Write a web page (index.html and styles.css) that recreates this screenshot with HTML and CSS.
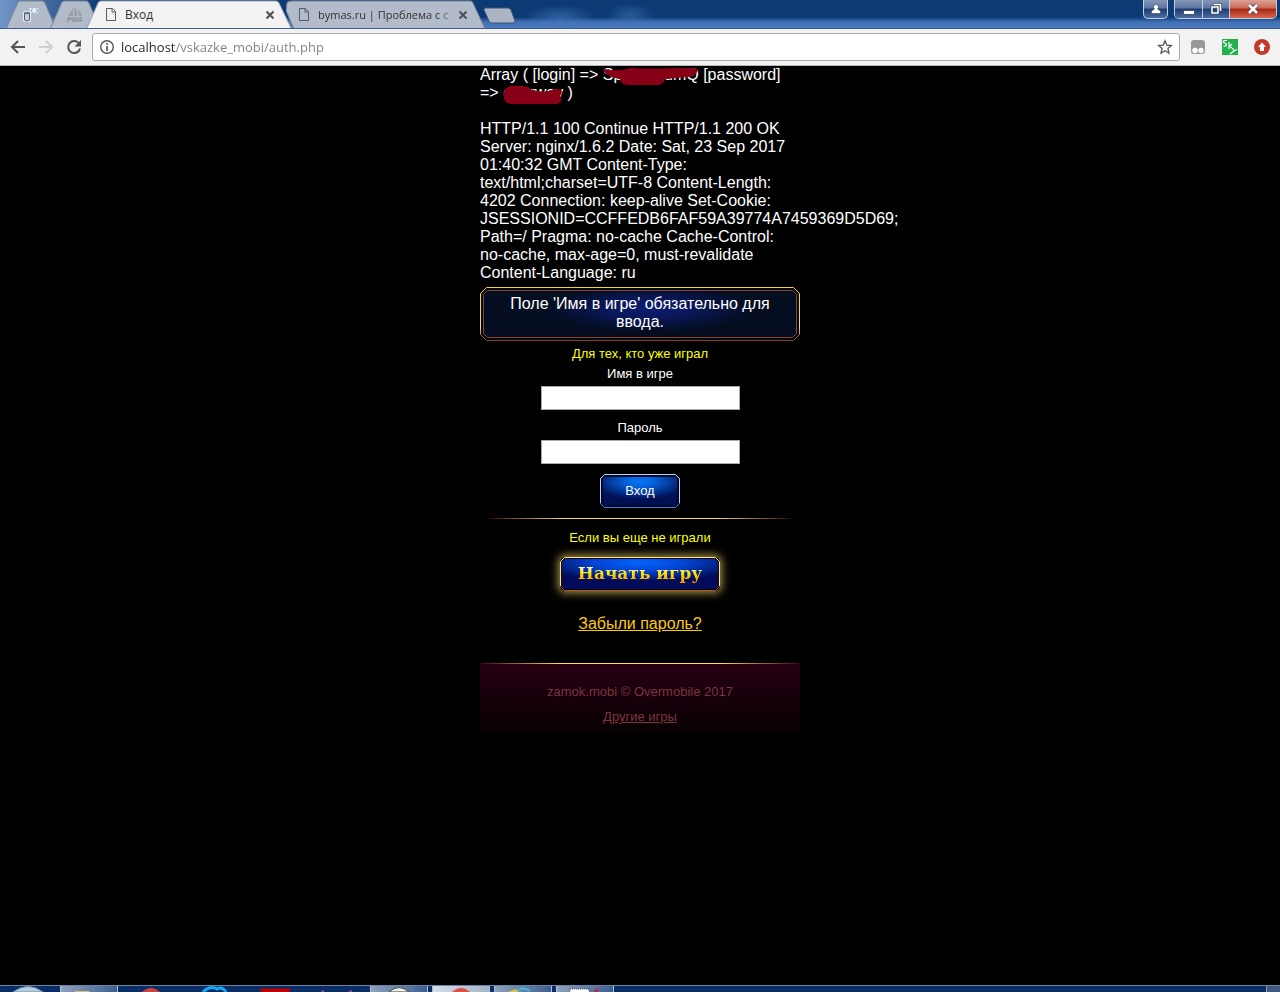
FILE: index.html
```
<!DOCTYPE html>
<html lang="ru">
<head>
  <meta charset="UTF-8">
  <meta name="viewport" content="width=device-width, initial-scale=1.0">
  <title>Вход</title>
  <link rel="stylesheet" href="styles.css">
</head>
<body>
  <header class="titlebar">
    <div class="tabs">
      <button class="tab pinned" aria-label="localhost">
        <svg class="tab-shape" viewBox="0 0 50 28" preserveAspectRatio="none"><path d="M0 28 L12 2 Q13 1 15 1 H36 Q38 1 39 3 L50 28Z"/></svg>
        <svg class="tab-icon" width="16" height="16" viewBox="0 0 16 16"><path d="M0 5Q4 2 8 5V14Q4 16 0 14zM6 1H15V6H8z" fill="#e9eff7"/><path d="M1.500 6Q4 4 6.500 6V13Q4 15 1.500 13zQ4 8 6.500 6" fill="#c9d3e0" stroke="#4f5b6c"/><path d="M9.500 1.500L8 3.500l1.500 2M13 1.500L14.500 3.500 13 5.500" fill="none" stroke="#7e8da2"/></svg>
      </button>
      <button class="tab pinned" aria-label="phpMyAdmin">
        <svg class="tab-shape" viewBox="0 0 50 28" preserveAspectRatio="none"><path d="M0 28 L12 2 Q13 1 15 1 H36 Q38 1 39 3 L50 28Z"/></svg>
        <svg class="tab-icon" width="16" height="16" viewBox="0 0 16 16"><path d="M6 1v8H1zM8 0q3 4 2 9H7zM11 2q3 3 4 7h-3z" fill="#9aa0a8"/><text x="0" y="15" class="pma">PMA</text></svg>
      </button>
      <button class="tab active">
        <svg class="tab-shape" viewBox="0 0 206 28" preserveAspectRatio="none"><path d="M0 29 L12 3 Q13 1 15 1 H190 Q192 1 193 3 L206 29Z"/></svg>
        <svg class="tab-icon" width="12" height="16" viewBox="0 0 12 16"><path d="M1.500 1.500h6l3 3v9h-9zM7 1.500V5h3.500" fill="none" stroke="#5a5a5a"/></svg>
        <span class="tab-title">Вход</span>
        <svg class="tab-close" width="10" height="10" viewBox="0 0 10 10"><path d="M1.500 1.500l7 7M8.500 1.500l-7 7"/></svg>
      </button>
      <button class="tab other">
        <svg class="tab-shape" viewBox="0 0 200 28" preserveAspectRatio="none"><path d="M1 3 Q2 1 6 1 H184 Q186 1 187 3 L199 28 H8 L0 10Z"/></svg>
        <svg class="tab-icon" width="12" height="16" viewBox="0 0 12 16"><path d="M1.500 1.500h6l3 3v9h-9zM7 1.500V5h3.500" fill="none" stroke="#555d68"/></svg>
        <span class="tab-title fade">bymas.ru | Проблема с с</span>
        <svg class="tab-close" width="10" height="10" viewBox="0 0 10 10"><path d="M1.500 1.500l7 7M8.500 1.500l-7 7"/></svg>
      </button>
      <button class="new-tab" aria-label="Новая вкладка">
        <svg width="34" height="17" viewBox="0 0 34 17"><path d="M2 1H25Q27 1 28 3L32 14Q32 16 30 16H9Q7 16 6 14L1 3Q1 1 2 1Z" fill="#aab4c2" stroke="#3d5378"/></svg>
      </button>
    </div>
    <div class="window-buttons">
      <button class="win user" aria-label="Профиль"><svg width="12" height="12" viewBox="0 0 12 12"><path d="M6 1.500a2.500 2.500 0 0 1 1.500 4.500L10.500 8v2.500h-9V8L4.500 6A2.500 2.500 0 0 1 6 1.500z" fill="#fff" stroke="#36486a" stroke-width=".6"/></svg></button>
      <div class="win-group">
        <button class="win" aria-label="Свернуть"><svg width="12" height="12" viewBox="0 0 12 12"><path d="M.500 7.500h11v4H.500z" fill="#fff" stroke="#46536b"/></svg></button>
        <button class="win" aria-label="Окно"><svg width="12" height="12" viewBox="0 0 12 12"><path d="M4 1.500h6.500V8M2 4h6v6H2z" fill="none" stroke="#3a4a66" stroke-width="3"/><path d="M4 1.500h6.500V8M2 4h6v6H2z" fill="none" stroke="#fff" stroke-width="1.500"/></svg></button>
        <button class="win close" aria-label="Закрыть"><svg width="14" height="12" viewBox="0 0 14 12"><path d="M3 2l8 8M11 2l-8 8" stroke="#5a4450" stroke-width="4.500"/><path d="M3 2l8 8M11 2l-8 8" stroke="#fff" stroke-width="2.600"/></svg></button>
      </div>
    </div>
  </header>

  <nav class="toolbar">
    <button class="nav-btn" aria-label="Назад"><svg width="16" height="16" viewBox="0 0 16 16"><path d="M15 8H2M8 2L2 8l6 6" fill="none" stroke="#555" stroke-width="2"/></svg></button>
    <button class="nav-btn" aria-label="Вперёд" disabled><svg width="16" height="16" viewBox="0 0 16 16"><path d="M1 8h13M8 2l6 6-6 6" fill="none" stroke="#d0d0d0" stroke-width="2"/></svg></button>
    <button class="nav-btn" aria-label="Обновить"><svg width="16" height="16" viewBox="0 0 16 16"><path d="M13 4.500A6 6 0 1 0 14 9.500" fill="none" stroke="#555" stroke-width="2"/><path d="M15 1v6.500H8.500z" fill="#555"/></svg></button>
    <div class="omnibox">
      <svg width="16" height="16" viewBox="0 0 16 16"><circle cx="8" cy="8" r="6.300" fill="none" stroke="#555" stroke-width="1.400"/><path d="M7.200 4h1.700v1.700H7.200zM7.200 7h1.700v5H7.200z" fill="#555"/></svg>
      <input class="url" type="text" aria-label="Адрес" value="localhost/vskazke_mobi/auth.php">
      <button class="star" aria-label="В закладки"><svg width="16" height="16" viewBox="0 0 16 16"><path d="M8 1.800l1.800 4.300 4.700.4-3.600 3.100 1.100 4.600L8 11.700l-4 2.500 1.100-4.600-3.600-3.100 4.700-.4z" fill="none" stroke="#555" stroke-width="1.300"/></svg></button>
    </div>
    <div class="extensions">
      <button class="nav-btn" aria-label="Tampermonkey"><svg width="16" height="16" viewBox="0 0 16 16"><rect x="1" y="1" width="14" height="14" rx="3" fill="#999"/><circle cx="5" cy="11.500" r="2.700" fill="#fff"/><circle cx="11" cy="11.500" r="2.700" fill="#fff"/></svg></button>
      <button class="nav-btn" aria-label="Sky"><svg width="16" height="16" viewBox="0 0 16 16"><path d="M0 0h16v16H0z" fill="#22b14c"/><path d="M5 1.500H2L1.500 3.500 4.500 5 4 7H1.500M7 3v7M10 5L7.500 7l2.500 2M10.500 9l1.500 3M15 10.500l-3 1.500-4 3" fill="none" stroke="#fff" stroke-width="1.200"/></svg></button>
      <button class="nav-btn" aria-label="Обновление"><svg width="16" height="16" viewBox="0 0 16 16"><circle cx="8" cy="8" r="8" fill="#c53929"/><path d="M8 3.500L12 8H10v4H6V8H4z" fill="#fff"/></svg></button>
    </div>
  </nav>

  <main class="page">
    <div class="content">
      <p class="dump">Array ( [login] =&gt; <span class="hidden login"><span>Sp</span><span>umQ</span><svg viewBox="0 0 96 20"><path d="M1 3Q14 6 28 2Q50 3 70 2H90Q96 2 94 6Q92 11 84 11L62 13Q60 19 54 19H24Q17 18 17 13Q9 12 3 8Q-1 4 1 3Z"/></svg></span> [password] =&gt; <span class="hidden password"><span>c</span><span>rway</span><svg viewBox="0 0 60 20"><path d="M8 2Q18 1 25 3L29 6Q40 9 49 6Q58 3 59 8L57 12Q61 18 54 20H8Q0 19 1 11Q0 4 8 2Z"/></svg></span> )</p>
      <p class="dump">HTTP/1.1 100 Continue HTTP/1.1 200 OK Server: nginx/1.6.2 Date: Sat, 23 Sep 2017 01:40:32 GMT Content-Type: text/html;charset=UTF-8 Content-Length: 4202 Connection: keep-alive Set-Cookie: JSESSIONID=CCFFEDB6FAF59A39774A7459369D5D69; Path=/ Pragma: no-cache Cache-Control: no-cache, max-age=0, must-revalidate Content-Language: ru</p>

      <div class="notice">
        <svg class="frame" viewBox="0 0 320 54" preserveAspectRatio="none">
          <defs>
            <radialGradient id="glow" cx="53%" cy="38%" r="50%" gradientTransform="translate(.17 0) scale(.68 1)"><stop offset="0" stop-color="#0b1c70"/><stop offset=".4" stop-color="#0a185c"/><stop offset=".75" stop-color="#061137"/><stop offset="1" stop-color="#040e20"/></radialGradient>
            <linearGradient id="gold" x1="0" y1="0" x2="0" y2="1"><stop offset="0" stop-color="#f5d52c"/><stop offset=".75" stop-color="#eed574"/><stop offset="1" stop-color="#8a3f14"/></linearGradient>
          </defs>
          <path d="M6.500 .5H313.500L319.500 6.500V47.500L313.500 53.500H6.500L.5 47.500V6.500Z" fill="#030817" stroke="url(#gold)"/>
          <path d="M7.500 3.500H312.500L316.500 7.500V46.500L312.500 50.500H7.500L3.500 46.500V7.500Z" fill="url(#glow)" stroke="#87432b"/>
        </svg>
        <span>Поле 'Имя в игре' обязательно для ввода.</span>
      </div>

      <form class="login-form">
        <p class="hint">Для тех, кто уже играл</p>
        <label for="login">Имя в игре</label>
        <input id="login" name="login" type="text">
        <label for="password">Пароль</label>
        <input id="password" name="password" type="password">
        <button class="enter" type="button">
          <svg class="frame" viewBox="0 0 80 34" preserveAspectRatio="none">
            <defs><radialGradient id="blue" cx="50%" cy="15%" r="65%"><stop offset="0" stop-color="#0878f8"/><stop offset=".3" stop-color="#0562dc"/><stop offset="1" stop-color="#010f55"/></radialGradient></defs>
            <path d="M4.500 .5H75.500L79.500 4.500V29.500L75.500 33.500H4.500L.5 29.500V4.500Z" fill="#02081f" stroke="#3b7ddd"/>
            <path d="M.5 29V4.500L4.500 .5H75.500L79.500 4.500V29" fill="none" stroke="#b5d2ff"/>
            <path d="M5 3H75L77 5V29L75 31H5L3 29V5Z" fill="url(#blue)"/>
          </svg>
          <span>Вход</span>
        </button>
      </form>

      <hr class="line">
      <p class="hint">Если вы еще не играли</p>
      <button class="start" type="button">
        <svg class="frame" viewBox="0 0 160 34" preserveAspectRatio="none">
          <defs><radialGradient id="royal" cx="50%" cy="10%" r="65%"><stop offset="0" stop-color="#0564ff"/><stop offset=".45" stop-color="#0446d4"/><stop offset="1" stop-color="#010b59"/></radialGradient></defs>
          <path d="M4.500 .5H155.500L159.500 4.500V29.500L155.500 33.500H4.500L.5 29.500V4.500Z" fill="#14031c" stroke="#a4581c"/>
          <path d="M.5 29V4.500L4.500 .5H155.500L159.500 4.500V29" fill="none" stroke="#ffe680"/>
          <path d="M5 2H155L158 5V29L155 32H5L2 29V5Z" fill="url(#royal)"/>
        </svg>
        <span>Начать игру</span>
      </button>
      <a class="forgot" href="#">Забыли пароль?</a>

      <footer class="footer">
        <hr class="line">
        <p>zamok.mobi © Overmobile 2017</p>
        <a href="#">Другие игры</a>
      </footer>
    </div>
  </main>

  <div class="taskbar">
    <button class="start-orb" aria-label="Пуск"><svg width="32" height="6" viewBox="0 0 32 6"><path d="M1 6Q16-5 31 6z" fill="#b9cbdc" stroke="#6591b3"/></svg></button>
    <button class="task open" aria-label="Проводник"><svg width="32" height="6" viewBox="0 0 32 6"><path d="M2 5h14v2H2z" fill="#d9bd74"/></svg></button>
    <button class="task" aria-label="Chrome"><svg width="32" height="6" viewBox="0 0 32 6"><path d="M7 6Q16-2 25 6z" fill="#c8453f"/></svg></button>
    <button class="task" aria-label="Браузер"><svg width="32" height="6" viewBox="0 0 32 6"><path d="M6 6Q13-1 20 3Q25 0 29 6" fill="none" stroke="#13a8f3" stroke-width="3"/></svg></button>
    <button class="task" aria-label="FileZilla"><svg width="32" height="6" viewBox="0 0 32 6"><path d="M1 4l2-2 2 1 2-1 2 1 2-1 2 1 2-1 2 1 2-1 2 1 2-1 2 1 2-1 2 1 2-1v4H2z" fill="#c00000"/></svg></button>
    <button class="task" aria-label="Редактор"><svg width="32" height="6" viewBox="0 0 32 6"><path d="M0 6l3-1M28 6l3-1" stroke="#7d568f" stroke-width="2"/></svg></button>
    <button class="task open" aria-label="Программа"><svg width="32" height="6" viewBox="0 0 32 6"><path d="M6 6Q16-3 26 6z" fill="#eee" stroke="#444"/></svg></button>
    <button class="task open light" aria-label="Chrome"><svg width="32" height="6" viewBox="0 0 32 6"><path d="M7 6Q16-2 25 6z" fill="#de5145"/></svg></button>
    <button class="task open" aria-label="Aimp"><svg width="32" height="6" viewBox="0 0 32 6"><path d="M1 6l8-3 3 3z" fill="#e0c437"/><path d="M10 5Q16 0 23 5" fill="none" stroke="#49b9dc" stroke-width="2"/></svg></button>
    <button class="task open" aria-label="Paint"><svg width="32" height="6" viewBox="0 0 32 6"><path d="M1 3h18l2 4H1z" fill="#fff" stroke="#555" stroke-dasharray="1 1"/><path d="M26 6l3-3" stroke="#b02d3a" stroke-width="3"/></svg></button>
    <button class="show-desktop" aria-label="Свернуть все окна"></button>
  </div>
</body>
</html>
```

FILE: styles.css
```
* {
  box-sizing: border-box;
}

body {
  margin: 0;
  min-height: 100vh;
  display: flex;
  flex-direction: column;
  background-color: #000;
  color: #fff;
  font-family: "Liberation Sans", Arial, sans-serif;
  font-size: 16px;
  line-height: 18px;
}

button {
  border: none;
  padding: 0;
  background: none;
  color: inherit;
  font-family: inherit;
}

p {
  margin: 0;
}

svg {
  flex-shrink: 0;
}

/* window title and tabs */
.titlebar {
  display: flex;
  justify-content: space-between;
  height: 29px;
  padding-left: 6px;
  overflow: hidden;
  border-bottom: 1px solid #405c91;
  background:
    radial-gradient(36px 12px at 560px 17px, rgba(70, 120, 190, 0.6), transparent),
    radial-gradient(24px 12px at 630px 15px, rgba(70, 120, 190, 0.5), transparent),
    linear-gradient(to right, #7295c8, transparent 100px),
    linear-gradient(#0c3a75 0, #0c3a75 17px, #416fb3 22px, #4b7bc3 28px);
}

.tabs {
  display: flex;
  align-items: flex-start;
}

.tab {
  position: relative;
  display: flex;
  align-items: center;
  height: 29px;
  color: #333;
  font-family: "Open Sans", sans-serif;
  font-size: 12px;
}

.tab-shape {
  position: absolute;
  top: 0;
  left: 0;
  width: 100%;
  height: 100%;
  fill: #b1bbc9;
  stroke: #7c8798;
}

.tab-icon,
.tab-title,
.tab-close {
  position: relative;
}

.tab-close {
  fill: none;
  stroke: #505050;
  stroke-width: 2;
}

.pinned {
  width: 50px;
  margin-right: -6px;
  justify-content: center;
}

.pma {
  fill: #858b93;
  font: italic bold 7px "Liberation Sans", sans-serif;
}

.active {
  z-index: 1;
  width: 206px;
  margin-left: -8px;
  padding: 0 17px 0 19px;
}

.active .tab-shape {
  fill: #f2f2f2;
  stroke: #9aa5b5;
}

.tab-title {
  flex: 1;
  margin-left: 8px;
  text-align: left;
  white-space: nowrap;
  overflow: hidden;
}

.other {
  width: 200px;
  margin-left: -6px;
  padding: 0 18px 0 12px;
}

.fade {
  font-size: 11px;
  -webkit-mask-image: linear-gradient(to right, #000 85%, transparent);
  mask-image: linear-gradient(to right, #000 85%, transparent);
}

.new-tab {
  height: 17px;
  margin: 7px 0 0 -3px;
}

.window-buttons {
  display: flex;
  gap: 6px;
  padding-right: 3px;
}

.win {
  display: flex;
  justify-content: center;
  align-items: center;
  width: 27px;
  height: 18px;
  background: linear-gradient(#8497b6 0, #5c759f 45%, #1d3c71 50%, #4a6ca4);
}

.user,
.win-group {
  height: 19px;
  border: 1px solid #c3cfe1;
  border-top: none;
  border-radius: 0 0 5px 5px;
  overflow: hidden;
}

.user {
  width: 25px;
}

.win-group {
  display: flex;
}

.win-group .win + .win {
  border-left: 1px solid #c3cfe1;
}

.win-group .close {
  width: 47px;
  background: linear-gradient(#dba394 0, #c9695a 45%, #a92712 50%, #d5664c);
}

/* address bar */
.toolbar {
  display: flex;
  align-items: center;
  height: 37px;
  padding: 0 10px;
  background-color: #f2f2f2;
  border-bottom: 1px solid #b6b4b6;
}

.nav-btn {
  width: 16px;
  height: 16px;
  margin-right: 12px;
}

.nav-btn svg,
.star svg {
  display: block;
}

.omnibox {
  flex: 1;
  display: flex;
  align-items: center;
  gap: 6px;
  height: 28px;
  margin-left: -2px;
  padding: 0 6px;
  background-color: #fff;
  border: 1px solid #a9a9a9;
  border-radius: 3px;
}

/* host is darker than the path */
.url {
  flex: 1;
  min-width: 0;
  border: none;
  padding: 0;
  outline: none;
  font-family: "Open Sans", sans-serif;
  font-size: 13px;
  color: transparent;
  background: linear-gradient(to right, #222 55px, #808080 55px);
  -webkit-background-clip: text;
  background-clip: text;
}

.extensions {
  display: flex;
  gap: 16px;
  padding-left: 10px;
}

.extensions .nav-btn {
  margin-right: 0;
}

/* page */
.page {
  flex: 1;
}

.content {
  display: flex;
  flex-direction: column;
  align-items: center;
  max-width: 320px;
  margin: 0 auto;
}

.dump {
  width: 100%;
  margin-bottom: 18px;
}

.dump + .dump {
  margin-bottom: 5px;
}

.hidden {
  position: relative;
  display: inline-flex;
  justify-content: space-between;
  height: 18px;
  vertical-align: top;
}

.hidden svg {
  position: absolute;
  top: 0;
  left: 0;
  width: 100%;
  fill: #880015;
}

.login {
  width: 96px;
}

.password {
  width: 60px;
}

.notice {
  position: relative;
  width: 100%;
  padding: 8px 20px 10px;
  text-align: center;
}

.frame {
  position: absolute;
  top: 0;
  left: 0;
  width: 100%;
  height: 100%;
}

.frame + span {
  position: relative;
}

.login-form {
  display: flex;
  flex-direction: column;
  align-items: center;
  padding-top: 4px;
}

.hint {
  color: #ff0;
  font-size: 13px;
}

.login-form label {
  margin-top: 2px;
  font-size: 13px;
}

.login-form input {
  width: 199px;
  height: 24px;
  margin: 3px 0 7px;
  padding: 2px 4px;
  background-color: #fff;
  border: 1px solid #a9a9a9;
}

.enter {
  position: relative;
  width: 80px;
  height: 34px;
  margin-top: 3px;
  padding-bottom: 2px;
  font-size: 13px;
}

.line {
  width: 300px;
  height: 1px;
  margin: 10px 0;
  border: none;
  background: linear-gradient(to right, #3c0612, #ffdf4f 25%, #ffdf4f 75%, #3c0612);
}

.start {
  position: relative;
  width: 160px;
  height: 34px;
  margin: 10px 0 24px;
  padding-bottom: 2px;
  border-radius: 5px;
  box-shadow: 0 0 8px 2px #a48f4a;
  font-family: "DejaVu Serif", serif;
  font-size: 17px;
  font-weight: bold;
}

.start span {
  color: transparent;
  background: linear-gradient(#fff 15%, #ffe600 50%, #ff9c00 90%);
  -webkit-background-clip: text;
  background-clip: text;
}

.forgot {
  color: #fc0;
}

.footer {
  display: flex;
  flex-direction: column;
  align-items: center;
  width: 100%;
  height: 71px;
  margin: 30px 0 20px;
  background: linear-gradient(#270012, #060003);
  color: #7d3440;
  font-size: 13px;
}

.footer .line {
  width: 100%;
  margin: 0 0 19px;
}

.footer p {
  margin-bottom: 7px;
}

.footer a {
  color: inherit;
}

/* taskbar */
.taskbar {
  display: flex;
  gap: 4px;
  height: 7px;
  background-color: #0a2e63;
  border-top: 1px solid #6584ab;
  overflow: hidden;
}

.start-orb {
  width: 56px;
}

.task {
  width: 58px;
}

.start-orb svg,
.task svg {
  display: block;
  margin: 0 auto;
}

.open {
  background: linear-gradient(to right, #8ea1bc, #3e5f90);
  border: 1px solid #aebccf;
  border-width: 0 1px;
}

.light {
  background: linear-gradient(to right, #d6dde8, #a5b4c9);
}

.show-desktop {
  width: 14px;
  margin-left: auto;
  border-left: 1px solid #8e9fb6;
  background-color: #42597d;
}
```
